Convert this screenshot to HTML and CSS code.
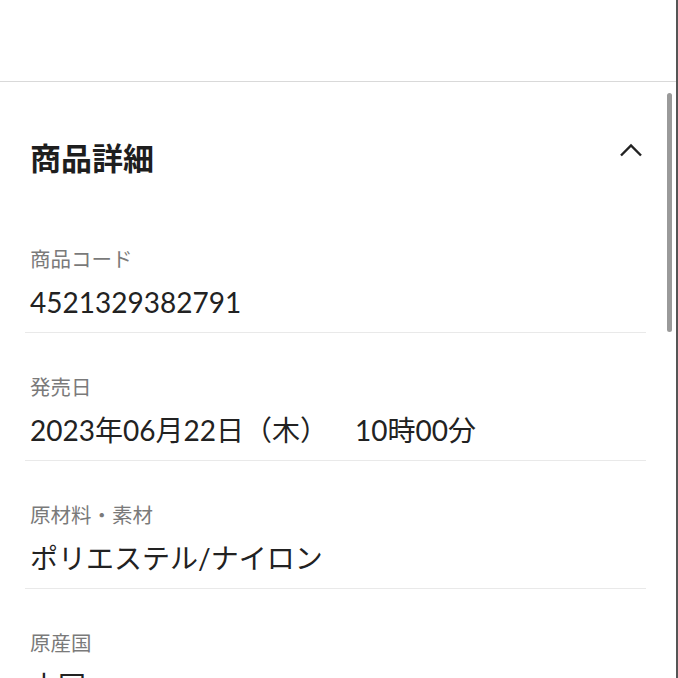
FILE: index.html
```html
<html>

<head>
    <meta charset="utf-8">
    <link rel="stylesheet" href="styles.css">
</head>

<body>
    <div class="screen">
        <div class="topBar"></div>

        <div class="details">
            <div class="detailsHead">
                <h2>商品詳細</h2>
                <svg class="chevron" width="24" height="14" viewBox="0 0 24 14">
                    <path d="M2 12.5 L12 2.5 L22 12.5" fill="none" stroke="#222" stroke-width="2.4" />
                </svg>
            </div>

            <div class="detailRow">
                <div class="detailLabel">商品コード</div>
                <div class="detailValue">4521329382791</div>
            </div>
            <div class="detailRow">
                <div class="detailLabel">発売日</div>
                <div class="detailValue">2023年06月22日（木）<span class="time">10時00分</span></div>
            </div>
            <div class="detailRow">
                <div class="detailLabel">原材料・素材</div>
                <div class="detailValue">ポリエステル/ナイロン</div>
            </div>
            <div class="detailRow">
                <div class="detailLabel">原産国</div>
                <div class="detailValue">中国</div>
            </div>
        </div>

        <!-- scroll thumb drawn over the content -->
        <div class="scrollThumb"></div>
    </div>
</body>

</html>
```

FILE: styles.css
```css
html,
body {
    margin: 0;
    padding: 0;
    overflow: hidden;
    background: #fff;
}

body {
    font-family: Lato, "Noto Sans CJK JP", sans-serif;
    color: #222;
}

.screen {
    position: relative;
    width: 676px;
    height: 678px;
    border-right: 2px solid #555;
    overflow: hidden;
}

.topBar {
    height: 81px;
    border-bottom: 1px solid #d9d9d9;
}

.details {
    padding: 52px 30px 0 25px;
}

.detailsHead {
    display: flex;
    align-items: center;
    justify-content: space-between;
    margin-bottom: 25px;
}

.detailsHead h2 {
    margin: 0 0 0 5px;
    font-family: "Noto Sans CJK JP", sans-serif;
    font-size: 31px;
    font-weight: bold;
    line-height: 46px;
    color: #1e1e1e;
}

.chevron {
    margin-right: 3px;
    margin-bottom: 14px;
}

.detailRow {
    padding: 38px 0 10px 5px;
    border-bottom: 1px solid #e9e9e9;
}

.detailLabel {
    font-family: "Noto Sans CJK JP", sans-serif;
    font-size: 20.5px;
    line-height: 30px;
    color: #7a7a7a;
}

.detailValue {
    margin-top: 9px;
    font-size: 28px;
    line-height: 40px;
    color: #222;
}

.time {
    margin-left: 27px;
}

.scrollThumb {
    position: absolute;
    left: 667px;
    top: 93px;
    width: 5px;
    height: 239px;
    border-radius: 3px;
    background: #9a9a9a;
}
```
